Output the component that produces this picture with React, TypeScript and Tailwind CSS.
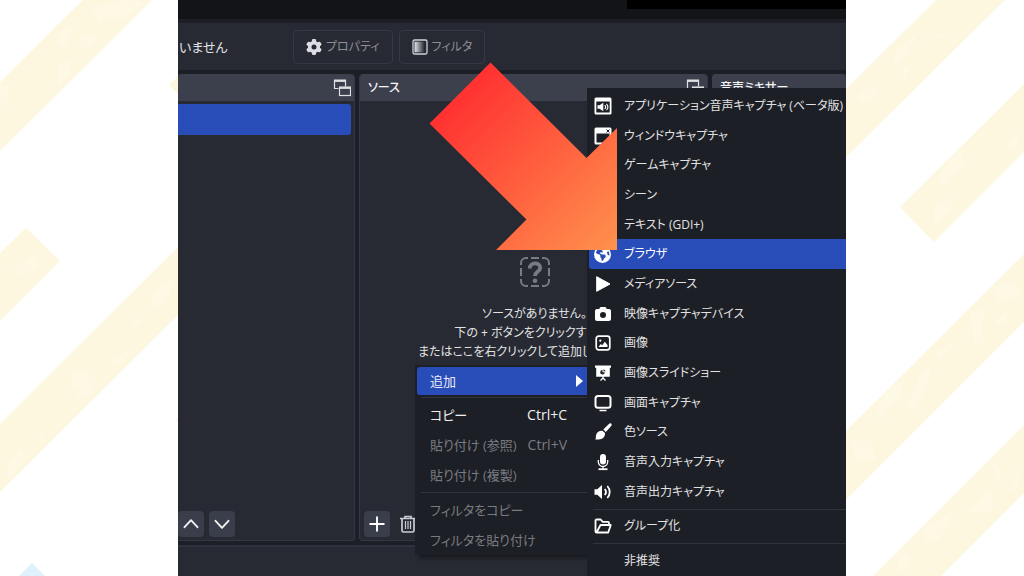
import React from "react";
import { FaCamera, FaEarthAmericas, FaGear } from "react-icons/fa6";

type IconProps = { className?: string };

const AppAudioIcon = () => (
  <svg viewBox="0 0 18 18" className="size-[18px]" fill="none">
    <path fillRule="evenodd" fill="currentColor" d="M2 .5h14a1.5 1.5 0 0 1 1.500 1.500v14a1.500 1.500 0 0 1-1.500 1.500H2A1.500 1.500 0 0 1 .5 16V2A1.500 1.500 0 0 1 2 .5ZM2.300 4.500v11h13.400v-11Z" />
    <path fill="currentColor" d="M3.500 8.300h2L9.300 5.800v8.400L5.500 11.700h-2Z" />
    <path stroke="currentColor" strokeWidth="1.100" d="M10.800 8c.9 1 .9 3 0 4M12.500 6.800c1.600 1.800 1.600 4.600 0 6.400" />
  </svg>
);

const WindowIcon = () => (
  <svg viewBox="0 0 18 18" className="size-[18px]">
    <path fillRule="evenodd" fill="currentColor" d="M2 .5h14a1.500 1.500 0 0 1 1.500 1.500v14a1.500 1.500 0 0 1-1.500 1.500H2A1.500 1.500 0 0 1 .5 16V2A1.500 1.500 0 0 1 2 .5ZM2.500 6.500v9h13v-9Z" />
    <path stroke="#1d1f26" strokeWidth="1" d="m12.500 2.500 3 3m0-3-3 3" />
  </svg>
);

const PlayIcon = () => (
  <svg viewBox="0 0 18 18" className="size-[18px]">
    <path fill="currentColor" d="M2.700 1.700 16 9 2.700 16.300Z" stroke="currentColor" strokeWidth="1" strokeLinejoin="round" />
  </svg>
);

const ImageIcon = () => (
  <svg viewBox="0 0 18 18" className="size-[18px]" fill="none">
    <rect x="2.200" y="2.200" width="13.600" height="13.600" rx="2.500" stroke="currentColor" strokeWidth="1.700" />
    <circle cx="6.300" cy="6.700" r="1.100" fill="currentColor" />
    <path fill="currentColor" d="m4.500 13 2.200-3 1.500 1.300 2.600-3.500 2.700 3.200v2Z" />
  </svg>
);

const SlideshowIcon = () => (
  <svg viewBox="0 0 18 18" className="size-[18px]">
    <path fill="currentColor" d="M1 1.500h16v2.300h-1.200v9H2.200v-9H1Z" />
    <path stroke="currentColor" strokeWidth="1.300" d="M9 12v3M9 14l-2.500 2.500M9 14l2.500 2.500" />
    <path fill="#1d1f26" d="M8.500 6v2.300h2.300A2.300 2.300 0 1 1 8.500 6Z" />
    <path fill="#1d1f26" d="M9.500 7.300V5l2.300 2.300Z" />
  </svg>
);

const DisplayIcon = () => (
  <svg viewBox="0 0 18 18" className="size-[18px]" fill="none">
    <rect x="1.500" y="2" width="15" height="11.800" rx="2.500" stroke="currentColor" strokeWidth="2" />
    <path stroke="currentColor" strokeWidth="1.500" d="M5.500 16.500h7" />
  </svg>
);

const BrushIcon = () => (
  <svg viewBox="0 0 18 18" className="size-[18px]">
    <path fill="currentColor" d="M17.300.7c.7.8.4 1.600-.3 2.500l-5.200 5.700-2.500-2.300L14.900 1c.8-.7 1.700-1 2.400-.3ZM8.500 7.700l2.500 2.400c.3 4-2.600 6.400-6.200 6.400H1.200c1-1 .5-2.600.8-4.300.5-2.800 3-4.700 6.500-4.500Z" />
  </svg>
);

const MicIcon = () => (
  <svg viewBox="0 0 18 18" className="size-[18px]">
    <rect x="6" y="1" width="6" height="10.500" rx="3" fill="currentColor" />
    <path fill="none" stroke="currentColor" strokeWidth="1.300" d="M4.300 7v1.800a4.700 4.700 0 0 0 9.400 0V7M9 13.500v2.800" />
    <path stroke="currentColor" strokeWidth="1.800" d="M4.500 16.200h9" />
  </svg>
);

const SpeakerIcon = () => (
  <svg viewBox="0 0 18 18" className="size-[18px]" fill="none">
    <path fill="currentColor" d="M.5 6.300h2.800L8 2v14l-4.700-4.300H.5Z" />
    <path stroke="currentColor" strokeWidth="1.800" d="M10.700 6c1.500 1.700 1.500 4.300 0 6M13.300 3c3.200 3.400 3.200 8.600 0 12" />
  </svg>
);

const FolderIcon = () => (
  <svg viewBox="0 0 18 18" className="size-[18px]" fill="none" stroke="currentColor" strokeWidth="1.800" strokeLinejoin="round">
    <path d="M15 8V5.800a1 1 0 0 0-1-1H8.700l-2-2.300H2.500a1 1 0 0 0-1 1v11a1 1 0 0 0 1 1h11.700L16.800 8H6.500l-3.700 7" />
  </svg>
);

const DockIcon = ({ className = "" }: IconProps) => (
  <svg viewBox="0 0 18 18" className={"size-[18px] shrink-0 " + className} fill="none" stroke="#dfe0e3" strokeWidth="1.200">
    <path d="M5.500 9.500h-4v-8h11v6" />
    <path strokeWidth="2.400" d="M1 1.700h12" />
    <rect x="6.500" y="8.500" width="11" height="8" fill="#3c404d" />
    <path strokeWidth="2.400" d="M6 8.700h12" />
  </svg>
);

const FilterIcon = () => (
  <svg viewBox="0 0 16 16" className="size-4 shrink-0" fill="none">
    <defs>
      <linearGradient id="shade">
        <stop offset="0" stopColor="#e4e5e8" />
        <stop offset="1" stopColor="#e4e5e8" stopOpacity="0" />
      </linearGradient>
    </defs>
    <rect x="1" y="1" width="14" height="14" rx="1.500" stroke="#d0d2d8" strokeWidth="1.300" />
    <rect x="2.500" y="2.700" width="10" height="10.600" fill="url(#shade)" />
  </svg>
);

const TrashIcon = () => (
  <svg viewBox="0 0 18 18" className="size-[18px]" fill="none" stroke="#c9ccd3" strokeWidth="1.700">
    <path d="M1 3.500h16M6 3V1.500h6V3M3 3.500v12A1.500 1.500 0 0 0 4.500 17h9a1.500 1.500 0 0 0 1.500-1.500v-12" />
    <path strokeWidth="1.200" d="M6.500 6v8M9 6v8M11.500 6v8" />
  </svg>
);

const ChevronIcon = ({ className = "" }: IconProps) => (
  <svg viewBox="0 0 18 18" className={"size-[18px] " + className} fill="none" stroke="#f0f0f2" strokeWidth="1.900" strokeLinecap="round" strokeLinejoin="round">
    <path d="m2.500 12.200 6.500-7 6.500 7" />
  </svg>
);

const PlusIcon = () => (
  <svg viewBox="0 0 18 18" className="size-[18px]" stroke="#fefefe" strokeWidth="1.900">
    <path d="M1.500 9h15M9 1.500v15" />
  </svg>
);

const EmptyIcon = () => (
  <svg viewBox="0 0 32 32" className="size-8" fill="none" stroke="#787b82" strokeWidth="2">
    <path d="M2 9V7a5 5 0 0 1 5-5h2M12 2h8M23 2h2a5 5 0 0 1 5 5v2M30 12v8M30 23v2a5 5 0 0 1-5 5h-2M20 30h-8M9 30H7a5 5 0 0 1-5-5v-2M2 20v-8" />
    <path strokeWidth="3.800" d="M10.800 12.500c0-6.800 10.400-6.600 10.400-.8 0 4-5.200 3.800-5.200 8.300" />
    <circle cx="16" cy="24.800" r="2.300" fill="#787b82" stroke="none" />
  </svg>
);

const Backdrop = () => (
  <svg viewBox="0 0 1024 576" preserveAspectRatio="xMidYMid slice" className="absolute inset-0 size-full" aria-hidden="true">
    <g fill="#fdf7df">
      <path d="M83 0h69L0 151V82ZM26 228l34 33-60 60v-68ZM178 247v68L0 492v-68ZM169 85l9-9v18ZM176 420l4-4v8Z" />
      <path d="M936 0h69L846 157V89ZM1024 84v68l-90 90-34-35ZM1024 254v68L846 500v-69ZM1024 425v68l-83 83h-68Z" />
    </g>
    <g fill="#fef9e5">
      <path d="M93 8l27-8 25 2-22 18-12-4-12 8ZM62 30l13-3-12 21-8-8ZM80 36l18-2-6 10-13 5ZM58 66l14-5-3 14-10 10ZM0 85l8 2 1 12-9 9ZM12 270l22-14 5 10-22 10ZM150 300l12-16 12-3-8 22-14 3ZM133 320l9-1-6 9ZM72 376c8-10 22-4 26 8l-12 16-10-4 6-9-10 2ZM112 360l20-12-4 9-14 9ZM5 470l17-24 2 15-14 18ZM36 436l9-4-3 9Z" />
      <path d="M896 50l22-18-10 22-14 12ZM932 38l19-7-7 6ZM858 94l16-9 2 10-14 8ZM904 68l6-2-6 15ZM936 180l24-34 4 18-18 22ZM934 204l12-6 8 8-20 20ZM1006 146l14-14-4 16ZM992 288l20-8 10 14-22 9ZM970 312l18-3-7 14 3 18-9 4ZM995 320l12-9-1 10-11 4ZM936 354l18-13-14 20ZM922 370l8-4-2 20-14 24-7-2ZM884 394l20-15-4 20-14 10-6 12-4-6ZM850 442l20-2 6 20-18 2ZM965 516l26-27 2 24-27-2ZM992 462l6 1 4 18-5 1ZM1010 492l11-27-5 26ZM920 530l34-19-14 28-12 4ZM896 552l14 3-4 17-6-2Z" />
    </g>
    <path fill="#dff1fb" d="m32 563 15 15H17Z" />
  </svg>
);

const Arrow = () => (
  <svg viewBox="0 0 188 188" className="pointer-events-none absolute top-[62px] left-[251px] z-30 w-[188px]" aria-hidden="true">
    <defs>
      <linearGradient id="heat" x1="30" y1="30" x2="188" y2="188" gradientUnits="userSpaceOnUse">
        <stop offset="0" stopColor="#ff3131" />
        <stop offset="1" stopColor="#ff914d" />
      </linearGradient>
    </defs>
    <path fill="url(#heat)" d="m61.500.5 96 95.500L188 66v122H67l30.500-30.500L.5 61.500Z" />
  </svg>
);

const sources = [
  { label: "アプリケーション音声キャプチャ (ベータ版)", icon: <AppAudioIcon /> },
  { label: "ウィンドウキャプチャ", icon: <WindowIcon /> },
  { label: "ゲームキャプチャ", icon: null },
  { label: "シーン", icon: null },
  { label: "テキスト (GDI+)", icon: null },
  { label: "ブラウザ", icon: <FaEarthAmericas className="size-[17px]" />, active: true },
  { label: "メディアソース", icon: <PlayIcon /> },
  { label: "映像キャプチャデバイス", icon: <FaCamera className="size-4" /> },
  { label: "画像", icon: <ImageIcon /> },
  { label: "画像スライドショー", icon: <SlideshowIcon /> },
  { label: "画面キャプチャ", icon: <DisplayIcon /> },
  { label: "色ソース", icon: <BrushIcon /> },
  { label: "音声入力キャプチャ", icon: <MicIcon /> },
  { label: "音声出力キャプチャ", icon: <SpeakerIcon /> },
];

const Divider = ({ className = "" }: IconProps) => (
  <li role="separator" className={"flex h-[5px] shrink-0 items-center " + className}>
    <span className="h-px w-full bg-[#30333e]" />
  </li>
);

type SourceItemProps = { label: string; icon?: React.ReactNode; active?: boolean };

const SourceItem = ({ label, icon, active }: SourceItemProps) => (
  <li role="none" className="flex flex-1">
    <button
      role="menuitem"
      className={
        "flex w-full items-center gap-3 rounded-l-[3px] pl-1 text-left whitespace-nowrap " +
        (active ? "bg-[#284cb8] text-white" : "text-[#e2e2e3]")
      }
    >
      <span className="flex w-[19px] shrink-0 justify-center text-white">{icon}</span>
      {label}
    </button>
  </li>
);

type ActionItemProps = { label: string; keys?: string; disabled?: boolean };

const ActionItem = ({ label, keys, disabled }: ActionItemProps) => (
  <li role="none">
    <button
      role="menuitem"
      disabled={disabled}
      className="flex h-[30px] w-full items-center pr-5 pl-[13px] text-left whitespace-nowrap text-[#f0f0f0] disabled:text-[#797b80]"
    >
      <span className="flex-1">{label}</span>
      {keys && <span className="text-sm">{keys}</span>}
    </button>
  </li>
);

const ContextMenu = () => (
  <ul role="menu" className="absolute top-[365px] left-[237px] z-10 w-[172px] bg-[#1d1f26] pt-0.5 pl-0.5 text-[13px] shadow-[4px_3px_4px_#17181d]">
    <li role="none">
      <button role="menuitem" aria-haspopup="menu" className="flex h-7 w-full items-center justify-between rounded-l-[3px] bg-[#284cb8] pr-1 pl-[13px] text-[#e8ebf5]">
        追加
        <svg viewBox="0 0 7 12" className="h-3 w-[7px]">
          <path fill="#fff" d="m0 0 7 6-7 6Z" />
        </svg>
      </button>
    </li>
    <Divider className="pl-1" />
    <ActionItem label="コピー" keys="Ctrl+C" />
    <ActionItem label="貼り付け (参照)" keys="Ctrl+V" disabled />
    <ActionItem label="貼り付け (複製)" disabled />
    <Divider className="pl-1" />
    <ActionItem label="フィルタをコピー" disabled />
    <ActionItem label="フィルタを貼り付け" disabled />
  </ul>
);

const SourceMenu = () => (
  <ul role="menu" className="absolute top-[88px] right-0 bottom-0 left-[409px] z-20 flex flex-col bg-[#1d1f26] pt-[3px] pl-0.5">
    {sources.map((source) => (
      <SourceItem key={source.label} {...source} />
    ))}
    <Divider className="pl-1" />
    <SourceItem label="グループ化" icon={<FolderIcon />} />
    <Divider className="pl-1" />
    <SourceItem label="非推奨" />
  </ul>
);

const ToolbarButton = ({ children }: { children: React.ReactNode }) => (
  <button className="flex h-[34px] items-center gap-1 rounded border border-[#363945] px-3 text-[#8d8f94]">{children}</button>
);

type IconButtonProps = { label: string; plain?: boolean; children: React.ReactNode };

const IconButton = ({ label, plain, children }: IconButtonProps) => (
  <button aria-label={label} className={"flex size-[26px] items-center justify-center rounded " + (plain ? "" : "bg-[#3a3e4a]")}>
    {children}
  </button>
);

const PanelHeader = ({ title, dock }: { title?: string; dock?: boolean }) => (
  <header className="flex h-[27px] items-center justify-between rounded-t bg-[#3c404d] pt-px pr-[3px] pl-2">
    <h2 className="font-medium text-[#f4f4f5]">{title}</h2>
    {dock && (
      <button aria-label="ドックを切り離す">
        <DockIcon />
      </button>
    )}
  </header>
);

export default function App() {
  return (
    <div className="relative grid min-h-screen grid-cols-[178px_1fr_178px] overflow-hidden bg-white">
      <Backdrop />
      <main className="relative col-start-2 flex flex-col overflow-hidden bg-[#1d1f26] font-['Open_Sans','Noto_Sans_CJK_JP',sans-serif] text-xs leading-5 [font-feature-settings:'palt','kern']">
        <div className="flex h-[19px] justify-end bg-[#131418]">
          <div className="h-[9px] w-[219px] bg-black" />
        </div>
        <div className="mt-1 flex h-[47px] items-center bg-[#272a33]">
          <p className="w-[115px] pl-px text-[13px] text-[#e2e2e3]">いません</p>
          <div className="flex gap-1.5">
            <ToolbarButton>
              <FaGear className="size-4 text-[#dcdde3]" />
              プロパティ
            </ToolbarButton>
            <ToolbarButton>
              <FilterIcon />
              フィルタ
            </ToolbarButton>
          </div>
        </div>
        <div className="mt-1 grid flex-1 grid-cols-[177px_349px_1fr] gap-1">
          <section className="flex flex-col rounded-r border-r border-b border-[#343743] bg-[#272a33]">
            <PanelHeader dock />
            <div className="mt-[3px] mr-[3px] h-[31px] rounded-r-[3px] bg-[#284cb8]" />
            <div className="mt-auto mb-[3px] flex gap-[5px]">
              <IconButton label="上へ">
                <ChevronIcon />
              </IconButton>
              <IconButton label="下へ">
                <ChevronIcon className="rotate-180" />
              </IconButton>
            </div>
          </section>
          <section className="flex flex-col rounded border border-t-0 border-[#343743] bg-[#272a33]">
            <PanelHeader title="ソース" dock />
            <div className="flex flex-1 flex-col items-center justify-center gap-4 pt-1 pl-0.5 text-center leading-[19px] whitespace-nowrap text-[#e2e2e3]">
              <EmptyIcon />
              <p>
                ソースがありません。
                <br />
                下の + ボタンをクリックするか、
                <br />
                またはここを右クリックして追加してください。
              </p>
            </div>
            <div className="mb-[3px] flex gap-[5px] pl-1">
              <IconButton label="追加">
                <PlusIcon />
              </IconButton>
              <IconButton label="削除" plain>
                <TrashIcon />
              </IconButton>
            </div>
          </section>
          <section className="rounded-tl bg-[#272a33]">
            <PanelHeader title="音声ミキサー" />
          </section>
        </div>
        <footer className="mt-1 h-[31px] border-t-2 border-[#30333e] bg-[#272a33]" />
        <ContextMenu />
        <SourceMenu />
        <Arrow />
      </main>
    </div>
  );
}
